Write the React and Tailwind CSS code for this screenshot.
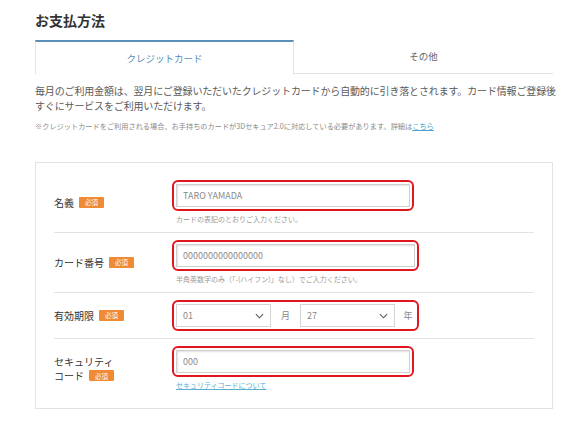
import React from "react";

const Badge = () => (
  <span className="ml-[5px] inline-flex h-[11px] w-[25px] items-center justify-center rounded-[1px] bg-[#ef8a35] text-[6.5px] leading-none text-white">
    必須
  </span>
);

const Chevron = () => (
  <svg width="9" height="6" viewBox="0 0 10 6" className="text-[#555]">
    <path d="M1 1l4 4 4-4" fill="none" stroke="currentColor" strokeWidth="1.2" />
  </svg>
);

const RedBox = ({ children, className = "" }) => (
  <div className={"rounded-[6px] border-2 border-[#e3151d] p-[2px] " + className}>{children}</div>
);

const Input = ({ value }) => (
  <div className="flex h-[23px] items-center border border-[#cfcfcf] bg-white px-[6px] text-[9px] text-[#8a8a8a] shadow-[inset_1px_1px_2px_rgba(0,0,0,0.12)]">
    {value}
  </div>
);

const Select = ({ value }) => (
  <div className="flex h-[23px] w-[95px] items-center justify-between border border-[#d5d5d5] bg-white pl-[6px] pr-[6px] text-[9px] text-[#8a8a8a]">
    <span>{value}</span>
    <Chevron />
  </div>
);

const Row = ({ label, children, last }) => (
  <div className={"flex items-center py-[7px] " + (last ? "" : "border-b border-[#e3e3e3]")}>
    <div className="w-[118px] text-[10px] leading-[14px] text-[#333]">{label}</div>
    <div className="flex-1">{children}</div>
  </div>
);

const Help = ({ children }) => (
  <div className="mt-[2px] pl-[4px] text-[7px] leading-[12px] text-[#999]">{children}</div>
);

export default function App() {
  return (
    <div
      className="min-h-[424px] w-[581px] bg-white"
      style={{ fontFamily: '"Noto Sans CJK JP", "Noto Sans", sans-serif' }}
    >
      <div className="ml-[35px] w-[518px] pt-[10px]">
        <h1 className="text-[14px] font-bold leading-[20px] text-[#333]">お支払方法</h1>
        <div className="mt-[10px] flex h-[34px]">
          <div className="flex w-[259px] items-center justify-center border-l border-r border-t-2 border-l-[#e3e3e3] border-r-[#e3e3e3] border-t-[#5b8fb8] text-[9.5px] text-[#5a8db5]">
            クレジットカード
          </div>
          <div className="flex flex-1 items-center justify-center border-b border-[#e3e3e3] text-[9.5px] text-[#666]">
            その他
          </div>
        </div>
        <p className="mt-[9px] w-[524px] text-[10px] leading-[15px] tracking-[-0.15px] text-[#5a5a5a]">
          毎月のご利用金額は、翌月にご登録いただいたクレジットカードから自動的に引き落とされます。カード情報ご登録後すぐにサービスをご利用いただけます。
        </p>
        <p className="mt-[7px] text-[7.2px] leading-[12px] text-[#8a8a8a]">
          ※クレジットカードをご利用される場合、お手持ちのカードが3Dセキュア2.0に対応している必要があります。詳細は
          <span className="text-[#4aa3c8] underline">こちら</span>
        </p>

        <div className="mt-[30px] border border-[#e3e3e3] px-[18px] pt-[10px] pb-[10px]">
          <Row
            label={
              <span className="flex items-center">
                名義<Badge />
              </span>
            }
          >
            <RedBox className="w-[242px]">
              <Input value="TARO YAMADA" />
            </RedBox>
            <Help>カードの表記のとおりご入力ください。</Help>
          </Row>
          <Row
            label={
              <span className="flex items-center">
                カード番号<Badge />
              </span>
            }
          >
            <RedBox className="w-[247px]">
              <Input value="0000000000000000" />
            </RedBox>
            <Help>半角英数字のみ（「-(ハイフン)」なし）でご入力ください。</Help>
          </Row>
          <Row
            label={
              <span className="flex items-center">
                有効期限<Badge />
              </span>
            }
          >
            <RedBox className="inline-flex w-[247px] items-center">
              <div className="flex items-center">
                <Select value="01" />
                <span className="w-[29px] text-center text-[9px] text-[#888]">月</span>
                <Select value="27" />
                <span className="w-[26px] text-center text-[9px] text-[#888]">年</span>
              </div>
            </RedBox>
          </Row>
          <Row
            last
            label={
              <div>
                <div>セキュリティ</div>
                <div className="flex items-center">
                  コード<Badge />
                </div>
              </div>
            }
          >
            <RedBox className="w-[242px]">
              <Input value="000" />
            </RedBox>
            <div className="mt-[2px] pl-[4px] text-[7px] leading-[12px] text-[#5aaed0] underline">
              セキュリティコードについて
            </div>
          </Row>
        </div>
      </div>
    </div>
  );
}
